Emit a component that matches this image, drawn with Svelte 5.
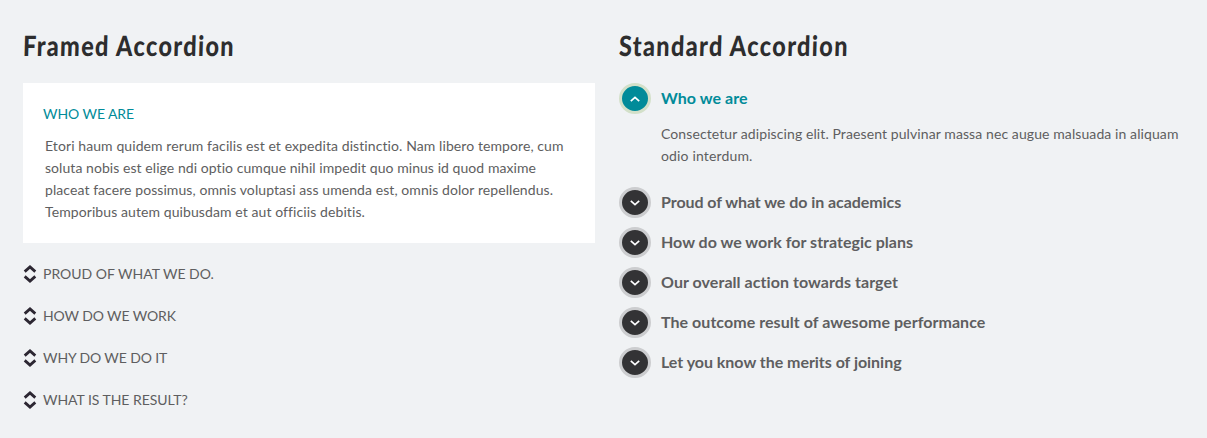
<script>
  const framed = [
    { text: 'Proud of what we do.', track: 0 },
    { text: 'How do we work', track: -0.12 },
    { text: 'Why do we do it', track: -0.12 },
    { text: 'What is the result?', track: -0.04 }
  ];
  const intro = [
    { text: 'Etori haum quidem rerum facilis est et expedita distinctio. Nam libero tempore, cum', track: 0.09 },
    { text: 'soluta nobis est elige ndi optio cumque nihil impedit quo minus id quod maxime', track: 0.06 },
    { text: 'placeat facere possimus, omnis voluptasi ass umenda est, omnis dolor repellendus.', track: 0.075 },
    { text: 'Temporibus autem quibusdam et aut officiis debitis.', track: 0.09 }
  ];
  const standard = [
    { text: 'Who we are', track: 0.05 },
    { text: 'Proud of what we do in academics', track: -0.06 },
    { text: 'How do we work for strategic plans', track: 0.02 },
    { text: 'Our overall action towards target', track: 0.06 },
    { text: 'The outcome result of awesome performance', track: 0.05 },
    { text: 'Let you know the merits of joining', track: -0.03 }
  ];
  const answer = [
    { text: 'Consectetur adipiscing elit. Praesent pulvinar massa nec augue malsuada in aliquam', track: 0.095 },
    { text: 'odio interdum.', track: 0.15 }
  ];
  let open = $state(0);
</script>

<main>
  <section class="framed">
    <h2><span>Framed Accordion</span></h2>
    <article>
      <h3>Who we are</h3>
      <p>
        {#each intro as line}
          <span class="line" style:letter-spacing="{line.track}px">{line.text}</span>
        {/each}
      </p>
    </article>
    <ul>
      {#each framed as item}
        <li>
          <svg width="14" height="20" viewBox="0 0 14 20" aria-hidden="true">
            <path d="M1.7 7.6 7 2.9l5.3 4.7M1.7 12.4 7 17.1l5.3-4.7" />
          </svg>
          <span style:letter-spacing="{item.track}px">{item.text}</span>
        </li>
      {/each}
    </ul>
  </section>

  <section class="standard">
    <h2><span>Standard Accordion</span></h2>
    {#each standard as item, i}
      <div class="item" class:open={open === i}>
        <button onclick={() => (open = i)}>
          <span class="dot">
            <svg width="10" height="6" viewBox="0 0 10 6" aria-hidden="true">
              <path d={open === i ? 'M.8 5.1 5 1.3 9.2 5.1' : 'M.8 .9 5 4.7 9.2 .9'} />
            </svg>
          </span>
          <span class="title" style:letter-spacing="{item.track}px">{item.text}</span>
        </button>
        {#if open === i}
          <p>
            {#each answer as line}
              <span class="line" style:letter-spacing="{line.track}px">{line.text}</span>
            {/each}
          </p>
        {/if}
      </div>
    {/each}
  </section>
</main>

<style>
  :global(body) {
    margin: 0;
    background: #f0f2f4;
  }
  main {
    box-sizing: border-box;
    height: 438px;
    padding: 26px 16px 0 23px;
    display: grid;
    grid-template-columns: 572px 572px;
    gap: 24px;
    font-family: Lato, sans-serif;
    font-size: 14px;
    line-height: 22px;
    font-variant-ligatures: none;
    color: #5e5e60;
    overflow: hidden;
  }
  h2 {
    margin: 0;
    height: 57px;
    font-size: 28px;
    line-height: 39px;
    font-weight: 900;
    color: #2d2d2e;
    white-space: nowrap;
  }
  h2 span {
    display: inline-block;
    letter-spacing: 1.6px;
    transform-origin: left;
    transform: scaleX(0.838) skewX(-2deg);
  }
  article {
    box-sizing: border-box;
    height: 160px;
    padding: 20px 20px 0;
    background: #fff;
  }
  h3 {
    margin: 0 0 10px;
    font-size: 14px;
    font-weight: 400;
    letter-spacing: -0.08px;
    text-transform: uppercase;
    color: #018b99;
  }
  p {
    margin: 0;
  }
  article p {
    padding-left: 2px;
  }
  .line {
    display: block;
    white-space: nowrap;
  }
  ul {
    list-style: none;
    margin: 20px 0 0;
    padding: 0;
  }
  li {
    display: flex;
    align-items: center;
    gap: 6px;
    height: 22px;
    margin-bottom: 20px;
    text-transform: uppercase;
  }
  li svg path {
    fill: none;
    stroke: #2c2732;
    stroke-width: 2.8;
  }
  button {
    display: flex;
    align-items: flex-start;
    gap: 10px;
    height: 31px;
    margin: 0 0 9px;
    padding: 0;
    border: 0;
    background: none;
    font: inherit;
    font-variant-ligatures: none;
    color: inherit;
  }
  .title {
    padding-top: 4px;
    font-size: 16px;
    font-weight: 700;
    white-space: nowrap;
  }
  .dot {
    box-sizing: border-box;
    width: 32px;
    height: 31px;
    display: grid;
    place-items: center;
    border: 3px solid #cccdcf;
    border-radius: 50%;
    background: #333335;
  }
  .dot path {
    fill: none;
    stroke: #fff;
    stroke-width: 1.7;
  }
  .open .dot {
    border-color: #d3e0c9;
    background: #018b99;
  }
  .open .title {
    color: #018b99;
  }
  .open p {
    padding: 0 0 20px 42px;
  }
</style>
